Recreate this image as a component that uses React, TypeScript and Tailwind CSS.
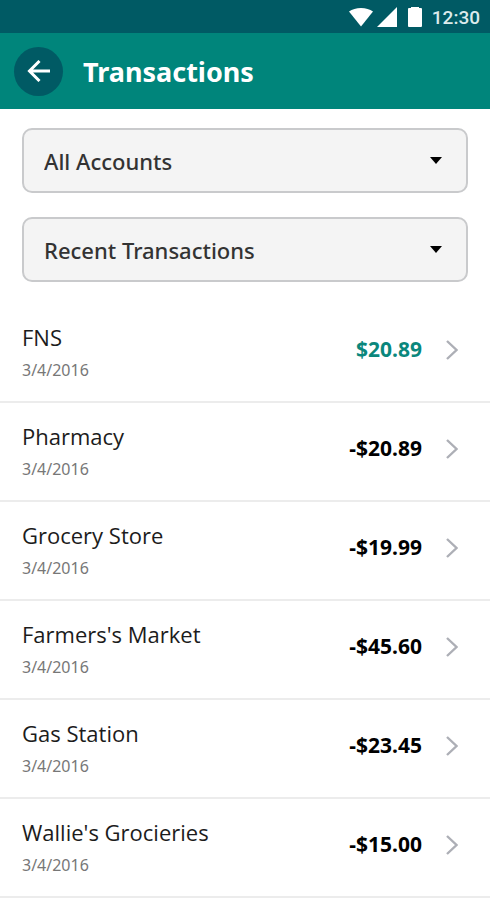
import React from "react";

type Transaction = { name: string; date: string; amount: string; credit?: boolean };

const transactions: Transaction[] = [
  { name: "FNS", date: "3/4/2016", amount: "$20.89", credit: true },
  { name: "Pharmacy", date: "3/4/2016", amount: "-$20.89" },
  { name: "Grocery Store", date: "3/4/2016", amount: "-$19.99" },
  { name: "Farmers's Market", date: "3/4/2016", amount: "-$45.60" },
  { name: "Gas Station", date: "3/4/2016", amount: "-$23.45" },
  { name: "Wallie's Grocieries", date: "3/4/2016", amount: "-$15.00" },
];

function StatusBar() {
  return (
    <div className="flex h-[33px] items-center justify-end bg-[#005a64] pr-[10px] text-white">
      <svg className="mr-1 h-5 w-6" viewBox="0 0 24 20" fill="currentColor" aria-hidden="true">
        <path d="M12 19.500 0 4.500C3.200 2.200 7.300 1 12 1s8.800 1.200 12 3.500z" />
      </svg>
      <svg className="mr-[11px] h-5 w-5" viewBox="0 0 20 20" fill="currentColor" aria-hidden="true">
        <path d="M20 0v20H0z" />
      </svg>
      <svg className="mr-[10px] h-5 w-3.5" viewBox="0 0 14 20" fill="currentColor" aria-hidden="true">
        <path d="M3 0h8v1h2a1 1 0 0 1 1 1v17a1 1 0 0 1-1 1H1a1 1 0 0 1-1-1V2a1 1 0 0 1 1-1h2z" />
      </svg>
      <span className="pt-0.5 font-[Roboto,sans-serif] text-[19px] leading-6 font-medium text-[#dcebec]">12:30</span>
    </div>
  );
}

function Picker({ label, value }: { label: string; value: string }) {
  return (
    <div className="grid items-center">
      <select
        aria-label={label}
        className="col-start-1 row-start-1 h-[65px] w-full appearance-none rounded-[10px] border-2 border-[#c9cacc] bg-[#f4f4f4] px-5 pt-0.5 text-[22px] font-medium text-[#333333]"
      >
        <option>{value}</option>
      </select>
      <svg
        className="pointer-events-none col-start-1 row-start-1 mr-[26px] h-[7px] w-3 justify-self-end"
        viewBox="0 0 12 7"
        aria-hidden="true"
      >
        <path d="M0 0h12L6 7z" fill="#000" />
      </svg>
    </div>
  );
}

function TransactionRow({ name, date, amount, credit }: Transaction) {
  return (
    <li className="border-b-2 border-[#ececec]">
      <button type="button" className="flex h-[97px] w-full items-center pr-8 pb-[5px] pl-[22px] text-left">
        <span className="flex grow flex-col pt-2">
          <span className="font-['Open_Sans',sans-serif] text-[22px] leading-8 text-[#1c1c1c]">{name}</span>
          <span className="text-[16px] leading-[34px] text-[#777777]">{date}</span>
        </span>
        <span className={credit ? "text-[21px] font-bold text-[#0a877c]" : "text-[21px] font-bold text-black"}>
          {amount}
        </span>
        <svg className="ml-6 h-5 w-3" viewBox="0 0 12 20" fill="none" aria-hidden="true">
          <path d="m1 1 9.500 9L1 19" stroke="#adafb6" strokeWidth="2.400" />
        </svg>
      </button>
    </li>
  );
}

export default function App() {
  return (
    <div className="bg-white font-['Noto_Sans',sans-serif]">
      <StatusBar />
      <header className="flex h-[76px] items-center gap-5 bg-[#00857b] px-3.5 text-white">
        <button
          type="button"
          aria-label="Back"
          className="flex size-[49px] items-center justify-center rounded-full bg-[#005a64]"
        >
          <svg className="h-[22px] w-6" viewBox="0 0 24 22" fill="none" aria-hidden="true">
            <path d="M23 11H3M12.500 1 2.500 11l10 10" stroke="currentColor" strokeWidth="3" />
          </svg>
        </button>
        <h1 className="pt-0.5 text-[27px] leading-9 font-bold">Transactions</h1>
      </header>
      <main>
        <div className="flex flex-col gap-6 px-[22px] pt-[19px] pb-[22px]">
          <Picker label="Account" value="All Accounts" />
          <Picker label="Filter" value="Recent Transactions" />
        </div>
        <ul>
          {transactions.map((transaction) => (
            <TransactionRow key={transaction.name} {...transaction} />
          ))}
        </ul>
      </main>
    </div>
  );
}
